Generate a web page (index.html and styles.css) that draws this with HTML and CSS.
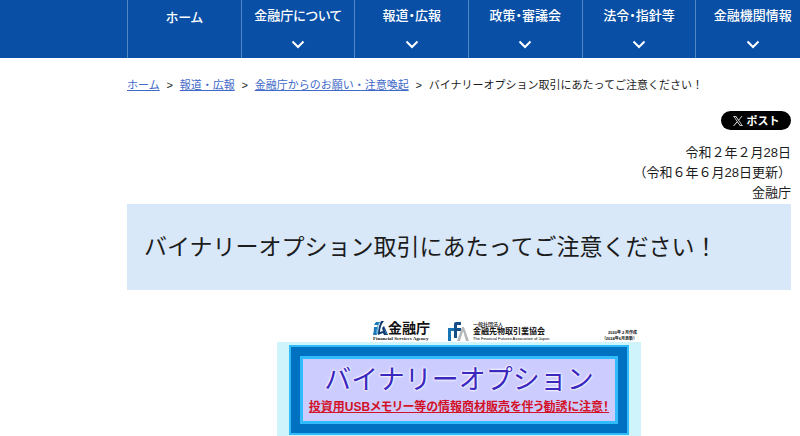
FILE: index.html
```
<!DOCTYPE html>
<html lang="ja">
<head>
<meta charset="utf-8">
<meta name="viewport" content="width=device-width, initial-scale=1">
<title>バイナリーオプション取引にあたってご注意ください！</title>
<link rel="stylesheet" href="styles.css">
</head>
<body>
<header class="site-header">
  <nav class="nav" aria-label="メイン">
    <a class="nav-item nav-home" href="#">ホーム</a>
    <a class="nav-item" href="#">金融庁について<svg class="chevron" viewBox="0 0 14 9" aria-hidden="true"><path d="M1.500 1.500 7 7l5.500-5.500"/></svg></a>
    <a class="nav-item" href="#">報道・広報<svg class="chevron" viewBox="0 0 14 9" aria-hidden="true"><path d="M1.500 1.500 7 7l5.500-5.500"/></svg></a>
    <a class="nav-item" href="#">政策・審議会<svg class="chevron" viewBox="0 0 14 9" aria-hidden="true"><path d="M1.500 1.500 7 7l5.500-5.500"/></svg></a>
    <a class="nav-item" href="#">法令・指針等<svg class="chevron" viewBox="0 0 14 9" aria-hidden="true"><path d="M1.500 1.500 7 7l5.500-5.500"/></svg></a>
    <a class="nav-item" href="#">金融機関情報<svg class="chevron" viewBox="0 0 14 9" aria-hidden="true"><path d="M1.500 1.500 7 7l5.500-5.500"/></svg></a>
  </nav>
</header>
<main class="content">
  <nav class="breadcrumb" aria-label="現在位置">
    <a href="#">ホーム</a><span class="sep">&gt;</span><a href="#">報道・広報</a><span class="sep">&gt;</span><a href="#">金融庁からのお願い・注意喚起</a><span class="sep">&gt;</span><span>バイナリーオプション取引にあたってご注意ください！</span>
  </nav>
  <div class="share">
    <a class="post" href="#"><svg class="x-logo" viewBox="0 0 24 24" aria-hidden="true"><path d="M14.300 10.200 23 0h-2l-7.600 8.800L7.300 0H.3l9.200 13.300L.3 24h2.100l8-9.300 6.400 9.300h7zm-2.900 3.300-.9-1.300L3.100 1.500h3.200l6 8.500.9 1.300 7.800 11.100h-3.200z"/></svg>ポスト</a>
  </div>
  <div class="issued">
    <p>令和２年２月28日</p>
    <p>（令和６年６月28日更新）</p>
    <p>金融庁</p>
  </div>
  <h1 class="title">バイナリーオプション取引にあたってご注意ください！</h1>
  <section class="flyer">
    <div class="flyer-head">
      <div class="fsa">
        <div class="fsa-row">
          <svg class="fsa-mark" viewBox="0 0 15 15" aria-hidden="true"><path fill="#1b78b8" d="M3 1h4L5 4H1zM1 6h4q-2 3-1 8H0q1-4 1-8z"/><path fill="#123a70" d="M8 0h3Q7 5 7 11l3-1-1-3 2-2q2 4 4 9h-4l-1-2-5 2q0-8 3-14z"/><path fill="#45a5d0" d="M6 1h1Q4 6 5 13H4Q3 6 6 1zM11 7l3 6h-1z"/></svg>
          <span class="fsa-name">金融庁</span>
        </div>
        <div class="fsa-en">Financial Services Agency</div>
      </div>
      <div class="ffaj">
        <svg class="ffaj-mark" viewBox="0 0 22 20" aria-hidden="true"><path fill="#1775b5" d="M0 19V6h6v3H3v10z"/><path fill="#164f87" d="M6 16V2q0-2 2-2h5v3H9v3h4v3H9v7z"/><path fill="#b5b8bb" d="m9 19 5-14h2l5 14h-3L15 9l-3 10z"/></svg>
        <div class="ffaj-text">
          <div class="ffaj-kind">一般社団法人</div>
          <div class="ffaj-name">金融先物取引業協会</div>
          <div class="ffaj-en">The Financial Futures Association of Japan</div>
        </div>
      </div>
      <div class="made"><div>2020年２月作成</div><div>（2024年6月更新）</div></div>
    </div>
    <div class="flyer-body">
      <div class="frame">
        <div class="panel">
          <h2 class="panel-title">バイナリーオプション</h2>
          <p class="panel-warning">投資用USBメモリー等の情報商材販売を伴う勧誘に注意！</p>
        </div>
      </div>
    </div>
  </section>
</main>
</body>
</html>
```
FILE: styles.css
```
* { box-sizing: border-box; }

body {
  margin: 0;
  background: #fff;
  color: #1c1c1c;
  font-family: "Liberation Sans", "Noto Sans CJK JP", sans-serif;
  overflow: hidden;
}

p, h1, h2 { margin: 0; }

.site-header {
  background: #084fa5;
  padding-left: 127px;
  overflow: hidden;
}

.nav {
  display: grid;
  grid-template-columns: repeat(6, 1fr);
  margin-right: -9px;
}

.nav-item {
  display: flex;
  flex-direction: column;
  align-items: center;
  gap: 15px;
  height: 58px;
  padding-top: 6px;
  border-left: 1px solid #5286c5;
  color: #fff;
  font-size: 13px;
  font-weight: 500;
  line-height: 19px;
  font-feature-settings: "palt";
  text-decoration: none;
}

.nav-home { padding-top: 8px; }

.chevron {
  width: 14px;
  height: 9px;
  fill: none;
  stroke: #fff;
  stroke-width: 2;
}

.content {
  padding: 0 9px 0 127px;
}

.breadcrumb {
  display: flex;
  padding-top: 18px;
  font-size: 11px;
  line-height: 18px;
  white-space: nowrap;
}

.breadcrumb a { color: #4169c8; }

.sep {
  width: 20px;
  text-align: center;
}

.share {
  display: flex;
  justify-content: flex-end;
  padding: 17px 0 13px;
}

.post {
  display: flex;
  align-items: center;
  justify-content: center;
  gap: 4px;
  width: 70px;
  height: 19px;
  border-radius: 10px;
  background: #000;
  color: #fff;
  font-size: 11px;
  font-weight: 700;
  line-height: 16px;
  text-decoration: none;
}

.x-logo {
  width: 10px;
  height: 10px;
  fill: #fff;
}

.issued {
  padding-bottom: 1px;
  font-size: 13px;
  line-height: 20px;
  text-align: right;
}

.title {
  padding: 24px 17px;
  background: #d8e8f8;
  font-size: 23px;
  font-weight: 400;
  line-height: 38px;
  white-space: nowrap;
}

.flyer {
  width: 364px;
  margin: 28px auto 0;
}

.flyer-head {
  display: flex;
  align-items: flex-end;
  height: 24px;
  padding: 0 4px 0 96px;
  color: #111;
  white-space: nowrap;
}

.fsa { width: 75px; }

.fsa-row {
  display: flex;
  align-items: center;
  height: 16px;
}

.fsa-mark { width: 15px; height: 15px; }

.fsa-name {
  font-size: 14px;
  font-weight: 700;
  line-height: 16px;
}

.fsa-en {
  font: 700 5px/6px "Liberation Serif", serif;
}

.ffaj {
  display: flex;
  gap: 3px;
}

.ffaj-mark { width: 22px; height: 20px; }

.ffaj-kind { font-size: 5px; font-weight: 500; line-height: 5px; }
.ffaj-name { font-size: 8px; font-weight: 700; line-height: 9px; }
.ffaj-en { color: #000; font-size: 4px; line-height: 6px; }

.made {
  margin-left: auto;
  font-size: 4px;
  font-weight: 700;
  line-height: 6px;
  text-align: right;
}

.flyer-body {
  padding: 3px 12px 12px;
  background: #d0f4fc;
}

.frame {
  padding: 9px;
  border: 2px solid #30bcfc;
  background: #0070c0;
}

.panel {
  padding: 3px 0 5px;
  border: 3px solid #30bcfc;
  background: #ccccff;
  text-align: center;
  white-space: nowrap;
}

.panel-title {
  color: #3b28c0;
  font-size: 27px;
  font-weight: 400;
  line-height: 36px;
  text-shadow: 0 0 2px #fff, 0 0 2px #fff, 0 0 3px #fff;
}

.panel-warning {
  color: #d31227;
  font-size: 12px;
  font-weight: 700;
  line-height: 18px;
  font-feature-settings: "palt";
  text-decoration: underline;
}
```
